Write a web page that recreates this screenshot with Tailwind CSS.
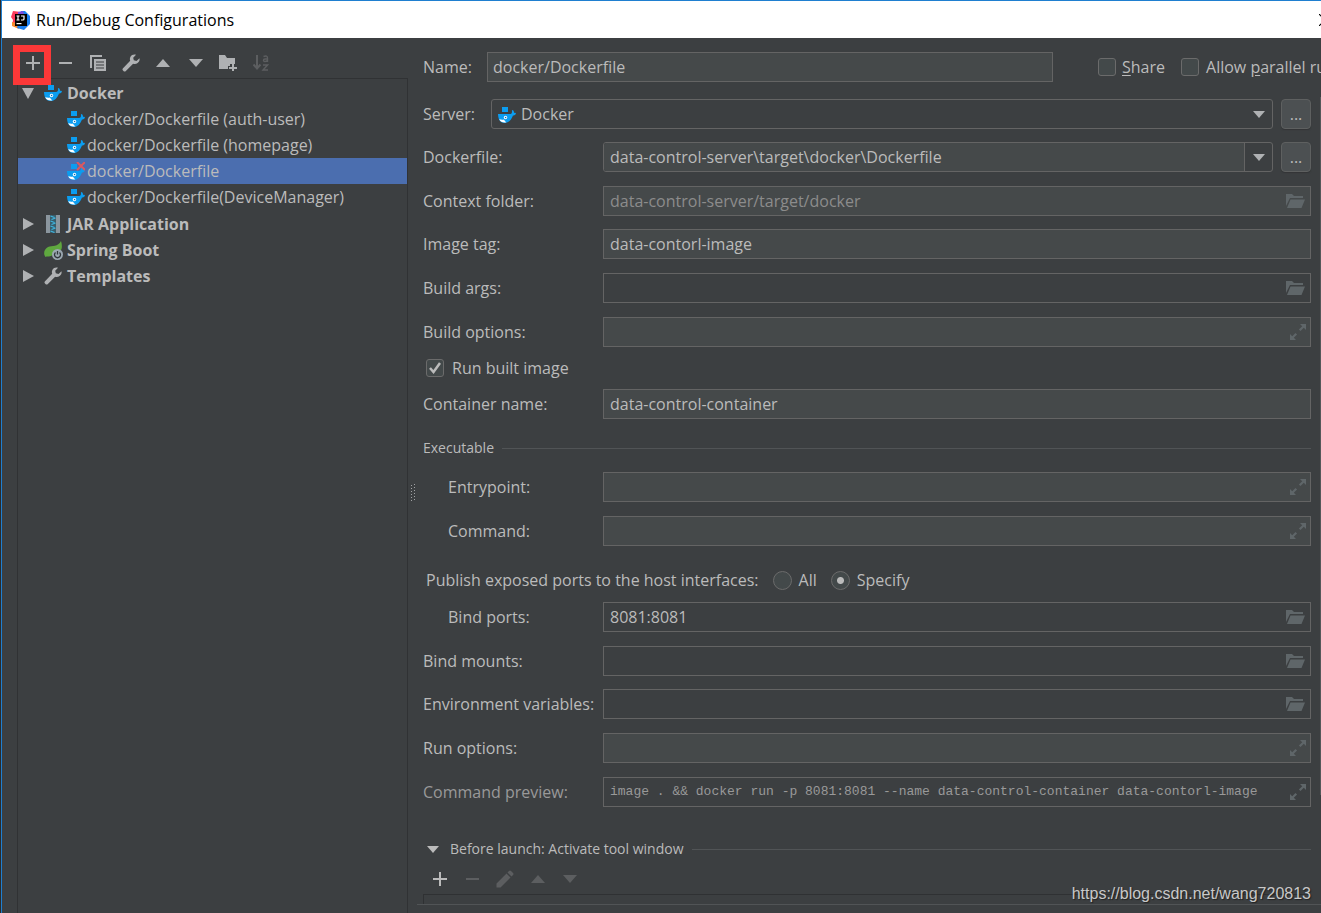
<!DOCTYPE html>
<html lang="en">
<head>
<meta charset="utf-8">
<title>Run/Debug Configurations</title>
<script src="https://cdn.jsdelivr.net/npm/@tailwindcss/browser@4"></script>
</head>
<body class="h-screen overflow-hidden bg-[#2b2b2b] pl-px font-['Open_Sans','Noto_Sans',sans-serif] text-base text-[#bbbbbb]">
<svg class="hidden" aria-hidden="true">
  <symbol id="docker" viewBox="0 0 18 16">
    <path fill="#0b9df0" d="M4 0h6v5h-6zM0 7h12c1.600 0 2.300-1.200 1.900-3.500l.8-.5c1 .8 1.400 1.700 1.400 2.900.7-.1 1.300 0 1.900.5-.6 1.500-1.700 2-3 2C13.400 12.600 10.600 16 6.600 16 2.500 16 .2 13 0 7z"/>
    <path fill="#fff" d="M1.200 12.200c2 .5 3.500.6 4.800.2.600 1.300 1.400 2.200 2.400 2.900-3.400.6-6-.4-7.200-3.100z"/>
    <circle cx="7.500" cy="10.500" r="1.700" fill="#fff"/><circle cx="7.600" cy="10.500" r=".8" fill="#0b6fb0"/>
  </symbol>
  <symbol id="plus" viewBox="0 0 14 14"><path fill="currentColor" d="M6 0h2v6h6v2H8v6H6V8H0V6h6z"/></symbol>
  <symbol id="minus" viewBox="0 0 14 14"><path fill="currentColor" d="M0 6h13v2H0z"/></symbol>
  <symbol id="up" viewBox="0 0 16 16"><path fill="currentColor" d="M1 12L8 4l7 8z"/></symbol>
  <symbol id="down" viewBox="0 0 16 16"><path fill="currentColor" d="M1 4l7 8 7-8z"/></symbol>
  <symbol id="wrench" viewBox="0 0 18 18"><path fill="currentColor" d="M17.500 4.300l-3 2.700-2.700-.7-.6-2.600L14 .8C11.800.1 9.600.8 8.500 2.700c-.7 1.300-.8 2.600-.3 4L.8 14.400c-.5.6-.5 1.300 0 1.900l.9.900c.6.500 1.300.5 1.900 0l7.500-7.400c1.600.5 3.200.3 4.500-.7 1.600-1.200 2.400-3 1.900-4.800z"/></symbol>
  <symbol id="folder" viewBox="0 0 19 14"><path fill="currentColor" d="M0 0h6l2 2h9v2H4L0 12zM4.500 5.500H19L15.500 14H1z"/></symbol>
  <symbol id="expand" viewBox="0 0 16 16"><path fill="currentColor" d="M10 0h6v6l-2.200-2.200-3.300 3.300-1.600-1.600 3.300-3.300zM0 10l2.200 2.200 3.300-3.300 1.600 1.600-3.300 3.300L6 16H0z"/></symbol>
</svg>

<div class="relative flex h-full flex-col border-t border-l border-[#1f7fd0] bg-[#3c3f41]">
  <header class="flex h-[37px] shrink-0 items-center gap-[5px] overflow-hidden bg-white pl-[9px] text-black">
    <svg class="size-5" viewBox="0 0 20 20" aria-hidden="true">
      <path fill="#fc3a5c" d="M2 1l8 1-4 13-5 1 1-6-2-3z"/><path fill="#f98a2c" d="M1 12l6 1 1 6-7-3z"/>
      <path fill="#1a7ff0" d="M10 1h4l5 5v8l-6 6-7-2z"/><path fill="#7a4be0" d="M7 2l5-1 1 3-6 1z"/>
      <path fill="#000" d="M4 4h12v12H4z"/><path stroke="#fff" stroke-width="1.200" fill="none" d="M5.500 6h3M7 6v4M5.500 10h3M10 6h3v3c0 .8-.5 1-1.200 1H10"/><path fill="#fff" d="M5.500 13h5v1.200h-5z"/>
    </svg>
    <h1 class="flex-1 text-base">Run/Debug Configurations</h1>
    <button aria-label="Close" class="-mr-[10px] shrink-0"><svg class="size-3" viewBox="0 0 12 12"><path d="M0 0l12 12M12 0L0 12" stroke="#000" stroke-width="1.200"/></svg></button>
  </header>

  <div class="flex min-h-0 flex-1">
    <aside class="flex w-[406px] shrink-0 flex-col pl-[15px]">
      <div class="flex h-10 items-center pt-[10px] pl-1 text-[#afb1b3]">
        <div class="flex w-[252px] justify-between">
          <button aria-label="Add" class="grid size-6 place-items-center"><svg class="size-[14px]"><use href="#plus"/></svg></button>
          <button aria-label="Remove" class="grid size-6 place-items-center"><svg class="size-[14px]"><use href="#minus"/></svg></button>
          <button aria-label="Copy" class="grid size-6 place-items-center"><svg class="size-4" viewBox="0 0 16 16"><path fill="currentColor" d="M0 0h12v2H2v11H0zM4 4h12v12H4z"/><path stroke="#3c3f41" stroke-width="1.200" d="M6 7h8M6 10h8M6 13h8"/></svg></button>
          <button aria-label="Edit templates" class="grid size-6 place-items-center"><svg class="size-[18px]"><use href="#wrench"/></svg></button>
          <button aria-label="Move up" class="grid size-6 place-items-center"><svg class="size-4"><use href="#up"/></svg></button>
          <button aria-label="Move down" class="grid size-6 place-items-center"><svg class="size-4"><use href="#down"/></svg></button>
          <button aria-label="New folder" class="grid size-6 place-items-center"><svg class="h-4 w-[18px]" viewBox="0 0 18 16"><path fill="currentColor" d="M0 0h6l2 3h8v6h-5v2H9v3H0zM13 9h2v3h3v2h-3v2h-2v-2h-3v-2h3z"/></svg></button>
          <button aria-label="Sort" disabled class="grid size-6 place-items-center text-[#5c5e60]"><svg class="h-[18px] w-4" viewBox="0 0 16 18"><path fill="none" stroke="currentColor" stroke-width="2" d="M4 1v13M0.500 10.500L4 14.500l3.500-4"/><path fill="none" stroke="currentColor" stroke-width="1.400" d="M10.500 2.500q4-1.500 4 1.500v4M14.500 5h-2.500q-1.500 0-1.500 1.300t1.500 1.200q2 0 2.500-1.500M10 11h4.500l-4.500 5h5"/></svg></button>
        </div>
      </div>
      <ul class="flex-1 border-t border-r border-l border-[#303234] pt-px leading-[26px]">
        <li class="flex h-[26px] items-center pl-1 font-bold"><svg class="mr-[10px] h-[11px] w-3 text-[#afb1b3]" viewBox="0 0 12 11"><path fill="currentColor" d="M0 0h12L6 11z"/></svg><svg class="mr-[5px] h-4 w-[18px]"><use href="#docker"/></svg>Docker</li>
        <li class="flex h-[26px] items-center pl-[49px]"><svg class="mr-[2px] h-4 w-[18px]"><use href="#docker"/></svg>docker/Dockerfile (auth-user)</li>
        <li class="flex h-[26px] items-center pl-[49px]"><svg class="mr-[2px] h-4 w-[18px]"><use href="#docker"/></svg>docker/Dockerfile (homepage)</li>
        <li class="flex h-[26px] items-center bg-[#4b6eaf] pl-[49px]"><svg class="mr-[2px] h-[18px] w-[18px]" viewBox="0 0 18 18"><use href="#docker" y="2" width="18" height="16"/><path stroke="#db5860" stroke-width="2" d="M10 0l8 8M18 0l-8 8"/></svg>docker/Dockerfile</li>
        <li class="flex h-[26px] items-center pl-[49px]"><svg class="mr-[2px] h-4 w-[18px]"><use href="#docker"/></svg>docker/Dockerfile(DeviceManager)</li>
        <li class="flex h-[27px] items-center pl-[5px] font-bold"><svg class="mr-3 h-3 w-[11px] text-[#afb1b3]" viewBox="0 0 11 12"><path fill="currentColor" d="M0 0l11 6-11 6z"/></svg><svg class="mr-[7px] h-[18px] w-[14px]" viewBox="0 0 14 18"><path fill="#8b969e" d="M0 0h4v18H0zM10 0h4v18h-4z"/><path fill="#3a5d6b" d="M4 0h6v18H4z"/><path stroke="#40b6e0" stroke-width="1.200" d="M4.500 1l4 1.500M5.500 4.500l4-1.500M4.500 6l4 1.500M5.500 9.500l4-1.500M4.500 11l4 1.500M5.500 14.500l4-1.500M4.500 16l4 1.500"/></svg>JAR Application</li>
        <li class="flex h-[26px] items-center pl-[5px] font-bold"><svg class="mr-[10px] h-3 w-[11px] text-[#afb1b3]" viewBox="0 0 11 12"><path fill="currentColor" d="M0 0l11 6-11 6z"/></svg><svg class="mr-[4px] h-[19px] w-[19px]" viewBox="0 0 19 19"><path fill="#5fa83f" d="M17 0c1.500 5 1 9-1 10l-9 5c-3 1-4 0-5.500 1C-1 13 0 8 4 6c4-1.500 10 0 13-6z"/><circle cx="13.500" cy="13.500" r="5.500" fill="#9aa7b0"/><path fill="none" stroke="#30363a" stroke-width="1.300" d="M11.500 11.500a3 3 0 1 0 4 0M13.500 10v3.500"/></svg>Spring Boot</li>
        <li class="flex h-[26px] items-center pl-[5px] font-bold"><svg class="mr-[10px] h-3 w-[11px] text-[#afb1b3]" viewBox="0 0 11 12"><path fill="currentColor" d="M0 0l11 6-11 6z"/></svg><svg class="mr-[5px] size-[18px] text-[#afb1b3]"><use href="#wrench"/></svg>Templates</li>
      </ul>
    </aside>

    <div class="flex w-[9px] shrink-0 items-center justify-end pt-[34px] pr-px" role="separator"><svg class="h-[18px] w-[6px] text-[#a0a2a4]" viewBox="0 0 6 18"><path stroke="currentColor" stroke-dasharray="1 2" d="M1.500 1v17M4.500 0v18"/></svg></div>

    <main class="min-w-0 flex-1 overflow-hidden">
      <div class="mt-[14px] flex h-[30px] items-center pl-[6px]">
        <label for="name" class="w-16 shrink-0">Name:</label>
        <input id="name" value="docker/Dockerfile" class="h-[30px] min-w-0 flex-1 border border-[#646464] bg-[#45494a] px-[5px] outline-none">
        <div class="flex w-[268px] shrink-0 items-center overflow-hidden pl-[45px] whitespace-nowrap">
          <input id="share" type="checkbox" class="mr-[6px] size-[18px] shrink-0 appearance-none rounded-[3px] border border-[#6b6b6b] bg-[#43494a]">
          <label for="share" class="mr-4 shrink-0"><span class="underline underline-offset-2">S</span>hare</label>
          <input id="parallel" type="checkbox" class="mr-[7px] size-[18px] shrink-0 appearance-none rounded-[3px] border border-[#6b6b6b] bg-[#43494a]">
          <label for="parallel">Allow <span class="underline underline-offset-2">p</span>arallel run</label>
        </div>
      </div>

      <div class="mt-[17px] pr-[10px] pl-[6px]">
        <div class="flex h-[30px] items-center">
          <label for="server" class="w-[68px] shrink-0">Server:</label>
          <div class="relative min-w-0 flex-1">
            <select id="server" class="block h-[30px] w-full appearance-none rounded-[3px] border border-[#646464] bg-[#3c3f41] pl-[29px] outline-none"><option>Docker</option></select>
            <svg class="absolute top-2 left-[7px] h-4 w-[18px]"><use href="#docker"/></svg>
            <svg class="absolute top-3 right-2 h-[7px] w-3 text-[#afb1b3]" viewBox="0 0 12 7"><path fill="currentColor" d="M0 0h12L6 7z"/></svg>
          </div>
          <button aria-label="Browse servers" class="ml-2 h-[30px] w-[30px] rounded-[4px] border border-[#5e6060] bg-[#4c5052] shadow-[0_1px_1px_#333537]">...</button>
        </div>
        <div class="mt-[13px] flex h-[30px] items-center">
          <label for="dockerfile" class="w-[180px] shrink-0">Dockerfile:</label>
          <div class="flex h-[30px] min-w-0 flex-1 overflow-hidden rounded-[3px] border border-[#646464]">
            <input id="dockerfile" value="data-control-server\target\docker\Dockerfile" class="min-w-0 flex-1 bg-[#45494a] px-[6px] outline-none">
            <button aria-label="Show history" class="grid w-7 place-items-center border-l border-[#646464]"><svg class="h-[7px] w-3 text-[#afb1b3]" viewBox="0 0 12 7"><path fill="currentColor" d="M0 0h12L6 7z"/></svg></button>
          </div>
          <button aria-label="Browse Dockerfile" class="ml-2 h-[30px] w-[30px] rounded-[4px] border border-[#5e6060] bg-[#4c5052] shadow-[0_1px_1px_#333537]">...</button>
        </div>
        <div class="mt-[14px] flex h-[30px] items-center">
          <label for="context" class="w-[180px] shrink-0">Context folder:</label>
          <div class="flex h-[30px] min-w-0 flex-1 items-center border border-[#646464] bg-[#45494a] pr-[5px] pl-[6px]"><input id="context" placeholder="data-control-server/target/docker" class="min-w-0 flex-1 outline-none placeholder:text-[#8c8c8c]"><button aria-label="Browse"><svg class="block h-[14px] w-[19px] text-[#5f6669]"><use href="#folder"/></svg></button></div>
        </div>
        <div class="mt-[13px] flex h-[30px] items-center">
          <label for="tag" class="w-[180px] shrink-0">Image tag:</label>
          <input id="tag" value="data-contorl-image" class="h-[30px] min-w-0 flex-1 border border-[#646464] bg-[#45494a] px-[6px] outline-none">
        </div>
        <div class="mt-[14px] flex h-[30px] items-center">
          <label for="args" class="w-[180px] shrink-0">Build args:</label>
          <div class="flex h-[30px] min-w-0 flex-1 items-center border border-[#646464] pr-[5px] pl-[6px]"><input id="args" class="min-w-0 flex-1 outline-none"><button aria-label="Browse"><svg class="block h-[14px] w-[19px] text-[#5f6669]"><use href="#folder"/></svg></button></div>
        </div>
        <div class="mt-[14px] flex h-[30px] items-center">
          <label for="bopts" class="w-[180px] shrink-0">Build options:</label>
          <div class="flex h-[30px] min-w-0 flex-1 items-center border border-[#646464] bg-[#45494a] pr-1 pl-[6px]"><input id="bopts" class="min-w-0 flex-1 outline-none"><button aria-label="Expand"><svg class="block size-4 text-[#5f6669]"><use href="#expand"/></svg></button></div>
        </div>
        <div class="relative mt-[11px] flex h-5 items-center pl-[3px]">
          <input id="runbuilt" type="checkbox" checked class="peer mr-2 size-[18px] appearance-none rounded-[3px] border border-[#6b6b6b] bg-[#43494a]">
          <svg class="pointer-events-none absolute top-1 left-[6px] hidden h-3 w-3 peer-checked:block" viewBox="0 0 12 12"><path fill="none" stroke="#bbbbbb" stroke-width="2.500" d="M1 6l3.500 4L11 1"/></svg>
          <label for="runbuilt">Run built image</label>
        </div>
        <div class="mt-[11px] flex h-[30px] items-center">
          <label for="cname" class="w-[180px] shrink-0">Container name:</label>
          <input id="cname" value="data-control-container" class="h-[30px] min-w-0 flex-1 border border-[#646464] bg-[#45494a] px-[6px] outline-none">
        </div>
        <div class="mt-[19px] flex h-5 items-center gap-2 text-sm">
          <h2>Executable</h2><div class="h-px flex-1 bg-[#515456]"></div>
        </div>
        <div class="mt-[14px] flex h-[30px] items-center">
          <label for="entry" class="w-[180px] shrink-0 pl-[25px]">Entrypoint:</label>
          <div class="flex h-[30px] min-w-0 flex-1 items-center border border-[#646464] bg-[#45494a] pr-1 pl-[6px]"><input id="entry" class="min-w-0 flex-1 outline-none"><button aria-label="Expand"><svg class="block size-4 text-[#5f6669]"><use href="#expand"/></svg></button></div>
        </div>
        <div class="mt-[14px] flex h-[30px] items-center">
          <label for="command" class="w-[180px] shrink-0 pl-[25px]">Command:</label>
          <div class="flex h-[30px] min-w-0 flex-1 items-center border border-[#646464] bg-[#45494a] pr-1 pl-[6px]"><input id="command" class="min-w-0 flex-1 outline-none"><button aria-label="Expand"><svg class="block size-4 text-[#5f6669]"><use href="#expand"/></svg></button></div>
        </div>
        <div class="mt-6 flex h-5 items-center pl-[3px]" role="radiogroup" aria-labelledby="ports">
          <span id="ports" class="mr-[14px]">Publish exposed ports to the host interfaces:</span>
          <input id="all" type="radio" name="ports" class="mr-[7px] size-[19px] appearance-none rounded-full border border-[#6b6b6b] bg-[#43494a] checked:bg-[radial-gradient(circle,#bbbbbb_3px,#43494a_4px)]">
          <label for="all" class="mr-[14px]">All</label>
          <input id="specify" type="radio" name="ports" checked class="mr-[7px] size-[19px] appearance-none rounded-full border border-[#6b6b6b] bg-[#43494a] checked:bg-[radial-gradient(circle,#bbbbbb_3px,#43494a_4px)]">
          <label for="specify">Specify</label>
        </div>
        <div class="mt-3 flex h-[30px] items-center">
          <label for="bports" class="w-[180px] shrink-0 pl-[25px]">Bind ports:</label>
          <div class="flex h-[30px] min-w-0 flex-1 items-center border border-[#646464] pr-[5px] pl-[6px]"><input id="bports" value="8081:8081" class="min-w-0 flex-1 outline-none"><button aria-label="Browse"><svg class="block h-[14px] w-[19px] text-[#5f6669]"><use href="#folder"/></svg></button></div>
        </div>
        <div class="mt-[14px] flex h-[30px] items-center">
          <label for="mounts" class="w-[180px] shrink-0">Bind mounts:</label>
          <div class="flex h-[30px] min-w-0 flex-1 items-center border border-[#646464] pr-[5px] pl-[6px]"><input id="mounts" class="min-w-0 flex-1 outline-none"><button aria-label="Browse"><svg class="block h-[14px] w-[19px] text-[#5f6669]"><use href="#folder"/></svg></button></div>
        </div>
        <div class="mt-[13px] flex h-[30px] items-center">
          <label for="env" class="w-[180px] shrink-0">Environment variables:</label>
          <div class="flex h-[30px] min-w-0 flex-1 items-center border border-[#646464] pr-[5px] pl-[6px]"><input id="env" class="min-w-0 flex-1 outline-none"><button aria-label="Browse"><svg class="block h-[14px] w-[19px] text-[#5f6669]"><use href="#folder"/></svg></button></div>
        </div>
        <div class="mt-[14px] flex h-[30px] items-center">
          <label for="ropts" class="w-[180px] shrink-0">Run options:</label>
          <div class="flex h-[30px] min-w-0 flex-1 items-center border border-[#646464] bg-[#45494a] pr-1 pl-[6px]"><input id="ropts" class="min-w-0 flex-1 outline-none"><button aria-label="Expand"><svg class="block size-4 text-[#5f6669]"><use href="#expand"/></svg></button></div>
        </div>
        <div class="mt-[14px] flex h-[30px] items-center text-[#999999]">
          <label for="preview" class="w-[180px] shrink-0">Command preview:</label>
          <div class="flex h-[30px] min-w-0 flex-1 items-center border border-[#646464] pr-1 pl-[6px]"><input id="preview" readonly value="image . &amp;&amp; docker run -p 8081:8081 --name data-control-container data-contorl-image" class="min-w-0 flex-1 font-['Liberation_Mono',monospace] text-[13px] outline-none"><button aria-label="Expand"><svg class="block size-4 text-[#5f6669]"><use href="#expand"/></svg></button></div>
        </div>
        <div class="mt-8 flex h-5 items-center pl-1 text-sm">
          <button aria-label="Collapse" class="mr-[11px]"><svg class="block h-[7px] w-3" viewBox="0 0 12 7"><path fill="currentColor" d="M0 0h12L6 7z"/></svg></button>
          <h2 class="mr-2">Before launch: Activate tool window</h2><div class="h-px flex-1 bg-[#515456]"></div>
        </div>
        <div class="mt-2 flex w-[159px] justify-between pl-[5px] text-[#5c5e60]">
          <button aria-label="Add task" class="grid size-6 place-items-center text-[#bbbbbb]"><svg class="size-[14px]"><use href="#plus"/></svg></button>
          <button aria-label="Remove task" disabled class="grid size-6 place-items-center"><svg class="size-[14px]"><use href="#minus"/></svg></button>
          <button aria-label="Edit task" disabled class="grid size-6 place-items-center"><svg class="size-[18px]" viewBox="0 0 18 18"><path fill="currentColor" d="M10.500 3.500l4 4L4.500 17.500H.5v-4zM11.500 2.500L13 1q1-1 2 0l2 2q1 1 0 2l-1.500 1.500z"/></svg></button>
          <button aria-label="Move task up" disabled class="grid size-6 place-items-center"><svg class="size-4"><use href="#up"/></svg></button>
          <button aria-label="Move task down" disabled class="grid size-6 place-items-center"><svg class="size-4"><use href="#down"/></svg></button>
        </div>
        <div class="mt-[3px] h-[10px] border-t border-l border-[#2f3133]"></div>
      </div>
      <div class="h-px bg-[#515456]"></div>
    </main>
  </div>

  <div class="pointer-events-none absolute top-[44px] left-[11px] h-10 w-[38px] border-[7px] border-[#fb3838]"></div>
  <div class="absolute top-24 right-0 h-[698px] w-px bg-[#55585a]"></div>
  <a href="https://blog.csdn.net/wang720813" class="absolute right-[10px] bottom-[9px] font-['Liberation_Sans',sans-serif] text-base leading-5 text-[#c8c8c8] [text-shadow:1px_1px_1px_#222]">https://blog.csdn.net/wang720813</a>
</div>
</body>
</html>
